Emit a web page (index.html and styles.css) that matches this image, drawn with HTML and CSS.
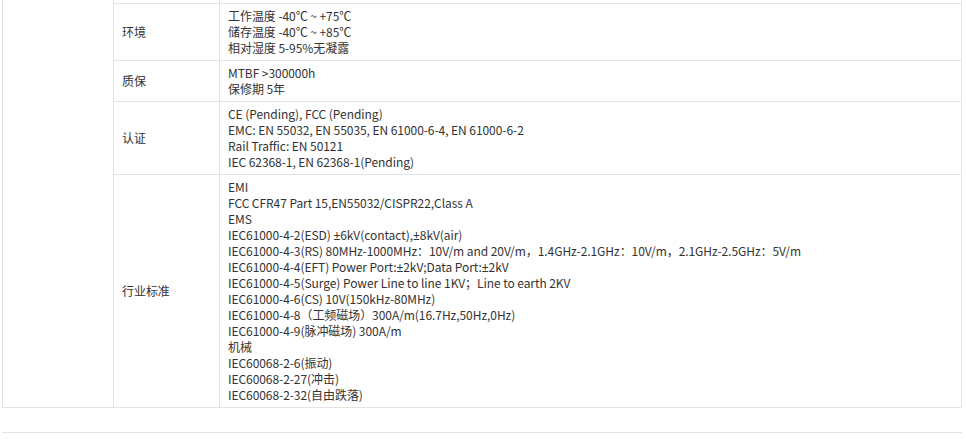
FILE: index.html
```html
<!DOCTYPE html>
<html lang="zh-CN">
<head>
    <meta charset="UTF-8">
    <meta name="viewport" content="width=device-width, initial-scale=1.0">
    <title>技术参数</title>
    <link rel="stylesheet" href="styles.css">
</head>
<body>

    <div class="specs">
        <table class="spec-table">
            <colgroup>
                <col class="col-group">
                <col class="col-name">
                <col class="col-value">
            </colgroup>
            <tr class="row-cut">
                <td class="group-cell" rowspan="5"></td>
                <td></td>
                <td></td>
            </tr>
            <tr>
                <td class="name">环境</td>
                <td>工作温度 -40℃ ~ +75℃<br>储存温度 -40℃ ~ +85℃<br>相对湿度 5-95%无凝露</td>
            </tr>
            <tr>
                <td class="name">质保</td>
                <td>MTBF &gt;300000h<br>保修期 5年</td>
            </tr>
            <tr>
                <td class="name">认证</td>
                <td>CE (Pending), FCC (Pending)<br>EMC: EN 55032, EN 55035, EN 61000-6-4, EN 61000-6-2<br>Rail Traffic: EN 50121<br>IEC 62368-1, EN 62368-1(Pending)</td>
            </tr>
            <tr>
                <td class="name">行业标准</td>
                <td>EMI<br>FCC CFR47 Part 15,EN55032/CISPR22,Class A<br>EMS<br>IEC61000-4-2(ESD) <span class="sym">±</span>6kV(contact),<span class="sym">±</span>8kV(air)<br>IEC61000-4-3(RS) 80MHz-1000MHz：10V/m and 20V/m，1.4GHz-2.1GHz：10V/m，2.1GHz-2.5GHz：5V/m<br>IEC61000-4-4(EFT) Power Port:<span class="sym">±</span>2kV;Data Port:<span class="sym">±</span>2kV<br>IEC61000-4-5(Surge) Power Line to line 1KV；Line to earth 2KV<br>IEC61000-4-6(CS) 10V(150kHz-80MHz)<br>IEC61000-4-8（工频磁场）300A/m(16.7Hz,50Hz,0Hz)<br>IEC61000-4-9(脉冲磁场) 300A/m<br>机械<br>IEC60068-2-6(振动)<br>IEC60068-2-27(冲击)<br>IEC60068-2-32(自由跌落)</td>
            </tr>
        </table>

        <div class="divider"></div>
    </div>

</body>
</html>
```

FILE: styles.css
```css
body {
    margin: 0;
    background: #fff;
    font-family: "Noto Sans CJK SC", "Noto Sans", sans-serif;
    font-size: 12px;
    color: #333;
}

.specs {
    margin-left: 2px;
    width: 960px;
}

.spec-table {
    width: 960px;
    border-collapse: collapse;
    table-layout: fixed;
}

.col-group {
    width: 111px;
}

.col-name {
    width: 106px;
}

.spec-table td {
    border: 1px solid #e3e3e3;
    padding: 4px 8px;
    line-height: 16px;
    letter-spacing: -0.06px;
    vertical-align: middle;
}

/* narrow plus-minus sign, the CJK font draws it full width */
.sym {
    font-family: "Noto Sans", sans-serif;
    line-height: 1;
}

.row-cut td {
    border-top: none;
    padding: 0;
    height: 3px;
    line-height: 0;
}

.spec-table td.group-cell {
    border-top: none;
}

.divider {
    margin-top: 24px;
    border-top: 1px solid #e3e3e3;
}
```
